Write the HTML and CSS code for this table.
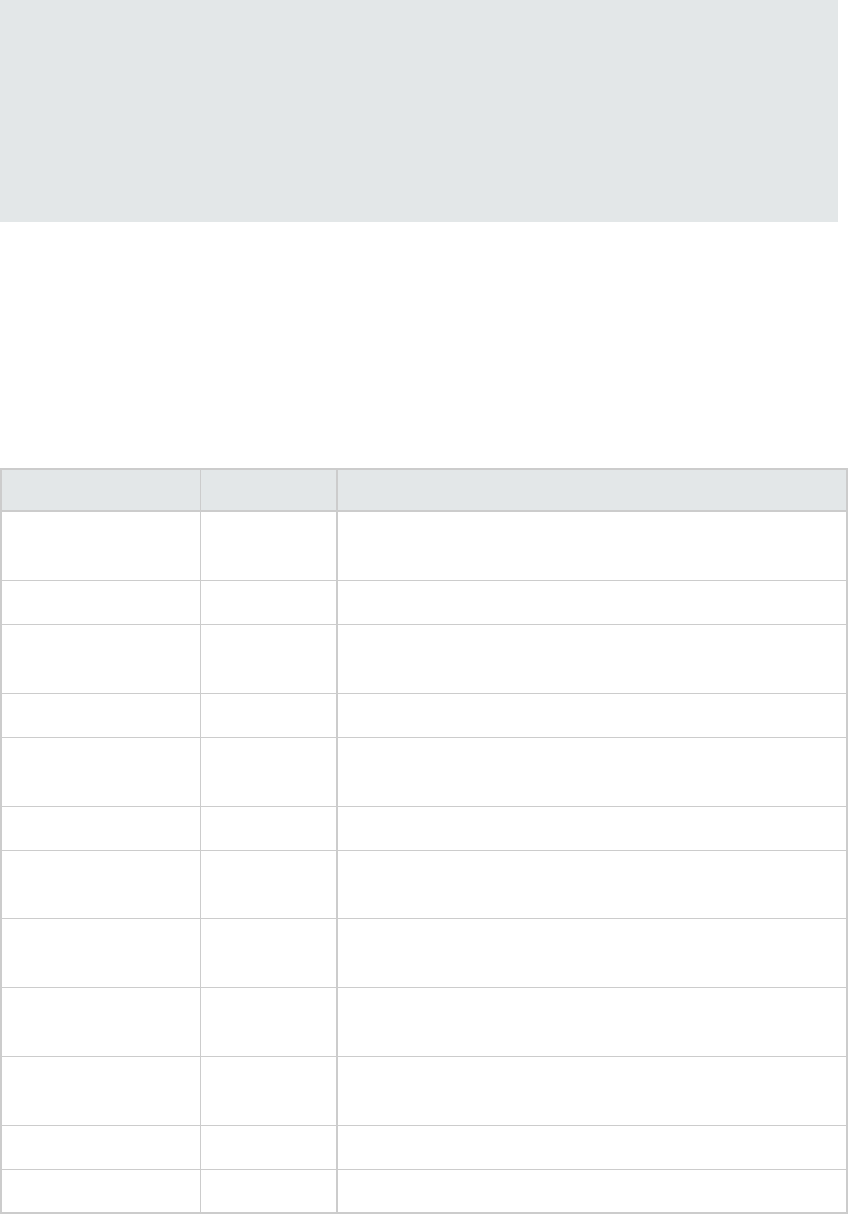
FILE: index.html
```html
<!DOCTYPE html>
<html lang="en">
<head>
<meta charset="utf-8">
<title>Table</title>
<link rel="stylesheet" href="styles.css">
</head>
<body>
<div class="banner"></div>
<div class="grid">
  <div class="row head"><div class="cell c1"></div><div class="cell c2"></div><div class="cell c3"></div></div>
  <div class="row tall"><div class="cell c1"></div><div class="cell c2"></div><div class="cell c3"></div></div>
  <div class="row short"><div class="cell c1"></div><div class="cell c2"></div><div class="cell c3"></div></div>
  <div class="row tall"><div class="cell c1"></div><div class="cell c2"></div><div class="cell c3"></div></div>
  <div class="row short"><div class="cell c1"></div><div class="cell c2"></div><div class="cell c3"></div></div>
  <div class="row tall"><div class="cell c1"></div><div class="cell c2"></div><div class="cell c3"></div></div>
  <div class="row short"><div class="cell c1"></div><div class="cell c2"></div><div class="cell c3"></div></div>
  <div class="row tall"><div class="cell c1"></div><div class="cell c2"></div><div class="cell c3"></div></div>
  <div class="row tall"><div class="cell c1"></div><div class="cell c2"></div><div class="cell c3"></div></div>
  <div class="row tall"><div class="cell c1"></div><div class="cell c2"></div><div class="cell c3"></div></div>
  <div class="row tall"><div class="cell c1"></div><div class="cell c2"></div><div class="cell c3"></div></div>
  <div class="row short"><div class="cell c1"></div><div class="cell c2"></div><div class="cell c3"></div></div>
  <div class="row short last"><div class="cell c1"></div><div class="cell c2"></div><div class="cell c3"></div></div>
</div>
</body>
</html>
```
FILE: styles.css
```css
html, body {
  margin: 0;
  padding: 0;
  background: #ffffff;
  font-family: "Liberation Sans", Arial, sans-serif;
}
.banner {
  width: 838px;
  height: 222px;
  background: #e3e7e8;
}
.grid {
  margin-top: 246px;
  width: 848px;
  box-sizing: border-box;
  border-top: 2px solid #cccccc;
  border-left: 2px solid #cccccc;
  border-right: 2px solid #cccccc;
}
.row {
  display: grid;
  grid-template-columns: 199px 137px 1fr;
  box-sizing: border-box;
  border-bottom: 1px solid #cccccc;
}
.row.head {
  height: 42px;
  background: #e3e7e8;
  border-bottom: 2px solid #cccccc;
}
.row.tall { height: 68.86px; }
.row.short { height: 44px; }
.row.last { border-bottom: 2px solid #cccccc; }
.cell.c1 { border-right: 1px solid #cccccc; }
.cell.c2 { border-right: 2px solid #cccccc; }
```
